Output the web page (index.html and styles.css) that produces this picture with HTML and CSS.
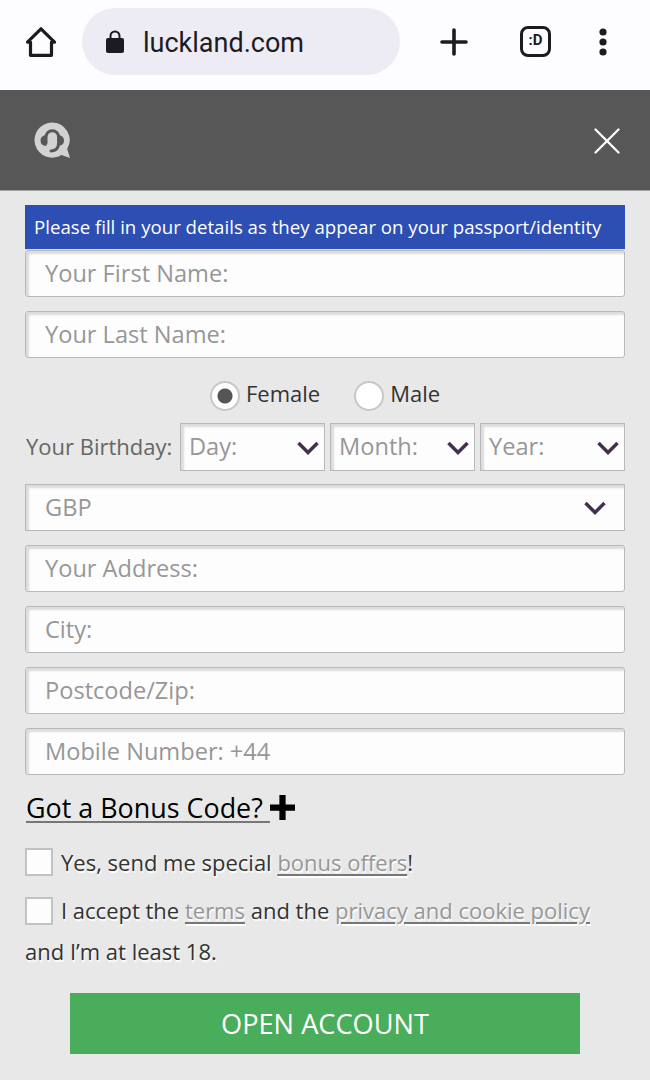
FILE: index.html
```
<!doctype html>
<html lang="en">
  <head>
    <meta charset="UTF-8" />
    <meta name="viewport" content="width=device-width, initial-scale=1.0" />
    <title>Luckland - Open Account</title>
    <link rel="stylesheet" href="styles.css">
  </head>
  <body>
    <div class="browser-bar">
      <svg class="home-icon" viewBox="0 0 32 32" fill="none" stroke="currentColor" stroke-width="3.2" stroke-linejoin="round" stroke-linecap="round">
        <path d="M5.5 16.2V29.3H26.5V16.2H29.5L16 2.8L2.500 16.2Z"></path>
      </svg>
      <div class="address">
        <svg class="lock-icon" viewBox="0 0 18 24">
          <path d="M4.5 9V6a4.5 4.5 0 0 1 9 0v3" fill="none" stroke="currentColor" stroke-width="2"></path>
          <rect x="0" y="8" width="18" height="15" rx="2" fill="currentColor"></rect>
        </svg>
        <span class="url">luckland.com</span>
      </div>
      <svg class="plus-icon" viewBox="0 0 28 28" stroke="currentColor" stroke-width="3.6" stroke-linecap="round">
        <line x1="14" y1="2" x2="14" y2="26"></line>
        <line x1="2" y1="14" x2="26" y2="14"></line>
      </svg>
      <span class="tabs">:D</span>
      <svg class="dots-icon" viewBox="0 0 8 28" fill="currentColor">
        <circle cx="4" cy="4" r="3.6"></circle>
        <circle cx="4" cy="14" r="3.6"></circle>
        <circle cx="4" cy="24" r="3.6"></circle>
      </svg>
    </div>

    <header class="top">
      <svg class="support-icon" viewBox="0 0 37 37">
        <path d="M18 .5a17.6 17.6 0 1 0 9.500 32.500L36 36L33.200 27A17.600 17.600 0 0 0 18 .5z" fill="#d2d2d2"></path>
        <path d="M12 21V15a6.200 6.200 0 0 1 12.600 0V21q0 7.500-7.600 8" fill="none" stroke="#575757" stroke-width="3" stroke-linecap="round"></path>
        <path d="M12.500 13v11q-6-.5-6-5.500t6-5.500zM24 13v11q6-.5 6-5.500t-6-5.500z" fill="#575757"></path>
      </svg>
      <svg class="close-icon" viewBox="0 0 26 26" stroke="currentColor" stroke-width="2.300" stroke-linecap="round">
        <line x1="1.500" y1="1.500" x2="24.500" y2="24.500"></line>
        <line x1="24.500" y1="1.500" x2="1.500" y2="24.500"></line>
      </svg>
    </header>

    <form class="signup">
      <div class="notice">Please fill in your details as they appear on your passport/identity</div>
      <input class="field" type="text" placeholder="Your First Name:">
      <input class="field" type="text" placeholder="Your Last Name:">

      <div class="gender">
        <label><input type="radio" name="gender" checked><span>Female</span></label>
        <label><input type="radio" name="gender"><span>Male</span></label>
      </div>

      <div class="birthday">
        <span class="birthday-label">Your Birthday:</span>
        <div class="select">
          <span>Day:</span>
          <svg class="arrow" viewBox="0 0 24 16"><path d="M2.500 3L12 12.500L21.500 3"></path></svg>
        </div>
        <div class="select">
          <span>Month:</span>
          <svg class="arrow" viewBox="0 0 24 16"><path d="M2.500 3L12 12.500L21.500 3"></path></svg>
        </div>
        <div class="select">
          <span>Year:</span>
          <svg class="arrow" viewBox="0 0 24 16"><path d="M2.500 3L12 12.500L21.500 3"></path></svg>
        </div>
      </div>

      <div class="select currency">
        <span>GBP</span>
        <svg class="arrow" viewBox="0 0 24 16"><path d="M2.500 3L12 12.500L21.500 3"></path></svg>
      </div>

      <input class="field" type="text" placeholder="Your Address:">
      <input class="field" type="text" placeholder="City:">
      <input class="field" type="text" placeholder="Postcode/Zip:">
      <input class="field" type="text" placeholder="Mobile Number: +44">

      <div class="bonus">
        <a class="bonus-link">Got a Bonus Code?&nbsp;</a>
        <svg class="bonus-plus" viewBox="0 0 24 24"><path d="M9 0h6v9h9v6h-9v9H9v-9H0V9h9z"></path></svg>
      </div>

      <label class="check offers"><input type="checkbox">Yes, send me special <a>bonus offers</a>!</label>
      <label class="check terms"><input type="checkbox">I accept the <a>terms</a> and the <a>privacy and cookie policy</a><br>and I’m at least 18.</label>

      <button class="submit" type="button">OPEN ACCOUNT</button>
    </form>
  </body>
</html>
```

FILE: styles.css
```
:root {
  --color-bg: #e8e8e8;
  --color-border: #b9b9b9;
  --color-muted: #979797;
  --color-ink: #1c1b22;
}

* {
  box-sizing: border-box;
}

body {
  margin: 0;
  height: 1080px;
  overflow: hidden;
  background-color: var(--color-bg);
  color: #333;
  font-family: 'Open Sans', 'Noto Sans', sans-serif;
  font-size: 22px;
}

svg {
  display: block;
  flex: none;
}

/* Browser toolbar */
.browser-bar {
  display: flex;
  align-items: center;
  height: 90px;
  padding: 0 0 7px 25px;
  background-color: #fdfcff;
  color: var(--color-ink);
}

.home-icon {
  width: 32px;
  height: 32px;
}

.address {
  display: flex;
  align-items: center;
  width: 318px;
  height: 67px;
  margin-left: 25px;
  padding-left: 24px;
  border-radius: 34px;
  background-color: #edecf4;
}

.lock-icon {
  width: 18px;
  height: 24px;
}

.url {
  margin-left: 19px;
  padding-top: 2px;
  font-family: Roboto, sans-serif;
  font-size: 27px;
}

.plus-icon {
  width: 28px;
  height: 28px;
  margin-left: 40px;
}

.tabs {
  width: 31px;
  height: 31px;
  margin-left: 52px;
  border: 3px solid var(--color-ink);
  border-radius: 8px;
  font-family: Roboto, sans-serif;
  font-size: 15px;
  font-weight: 700;
  line-height: 23px;
  text-align: center;
}

.dots-icon {
  width: 8px;
  height: 28px;
  margin-left: 48px;
}

/* Site header */
.top {
  display: flex;
  align-items: center;
  justify-content: space-between;
  height: 100px;
  padding: 1px 30px 0 34px;
  background-color: #575757;
  box-shadow: 0 1px 0 #a0a0a0;
  color: #fff;
}

.support-icon {
  width: 37px;
  height: 37px;
}

.close-icon {
  width: 26px;
  height: 26px;
}

/* Form */
.signup {
  padding: 15px 25px 0;
}

.notice {
  height: 45px;
  padding-left: 9px;
  border-bottom: 1px solid #d5dbe9;
  background-color: #2d4eb3;
  color: #fff;
  font-size: 18.65px;
  line-height: 43px;
  white-space: nowrap;
}

.field,
.select {
  display: block;
  width: 100%;
  height: 47px;
  padding: 0 19px 2px;
  border: 1px solid var(--color-border);
  border-radius: 3px;
  background-color: #fdfdfd;
  box-shadow: inset 3px 3px 2px #dcdcdc;
  color: var(--color-muted);
  font-family: inherit;
  font-size: 23.6px;
}

.field {
  margin-bottom: 14px;
}

.field::placeholder {
  color: var(--color-muted);
  opacity: 1;
}

.gender {
  display: flex;
  gap: 34px;
  height: 31px;
  margin-top: 22px;
  padding-left: 185px;
}

.gender label {
  display: flex;
  align-items: center;
  line-height: 28px;
}

.gender span {
  padding-bottom: 5px;
}

.gender input {
  appearance: none;
  width: 30px;
  height: 30px;
  margin: 0 6px 0 0;
  border: 2px solid #c6c6c6;
  border-radius: 50%;
  background-color: #fff;
}

.gender input:checked {
  background-image: radial-gradient(circle, #555 7px, #fff 8px);
}

.birthday {
  display: flex;
  align-items: center;
  gap: 5px;
  height: 48px;
  margin: 12px 0 13px;
}

.birthday-label {
  width: 150px;
  padding: 0 0 2px 1px;
  color: #666;
  white-space: nowrap;
}

.select {
  display: flex;
  align-items: center;
  justify-content: space-between;
  border-radius: 0;
}

.birthday .select {
  flex: none;
  width: 145px;
  height: 48px;
  padding: 0 4px 2px 8px;
}

.currency {
  margin-bottom: 14px;
  padding-right: 17px;
}

.arrow {
  width: 24px;
  height: 16px;
  margin-top: 3px;
  fill: none;
  stroke: #42304c;
  stroke-width: 3.5;
}

.bonus {
  display: flex;
  align-items: center;
  height: 38px;
  margin-top: 13px;
  padding-left: 1px;
  color: #000;
  font-size: 26.9px;
}

.bonus-link {
  border-bottom: 2px solid #777;
  line-height: 27px;
}

.bonus-plus {
  width: 25px;
  height: 25px;
  margin-bottom: 2px;
}

.check {
  display: block;
  line-height: 41px;
  text-shadow: 1px 2px 1px #fff;
  white-space: nowrap;
}

.check input {
  appearance: none;
  width: 28px;
  height: 28px;
  margin: 0 8px 0 0;
  border: 2px solid #c2c2c2;
  background-color: #fdfdfd;
  vertical-align: -6px;
}

.check a {
  color: var(--color-muted);
  text-decoration: underline;
  text-decoration-color: #777;
  text-decoration-thickness: 2px;
  text-underline-offset: 3px;
}

.offers {
  margin-top: 15px;
}

.offers input {
  vertical-align: -5px;
}

.terms {
  margin-top: 7px;
}

.submit {
  display: block;
  width: 510px;
  height: 61px;
  margin: 21px auto 0;
  border: 0;
  background-color: #49ad5c;
  color: #fff;
  font-family: inherit;
  font-size: 27.2px;
}
```
